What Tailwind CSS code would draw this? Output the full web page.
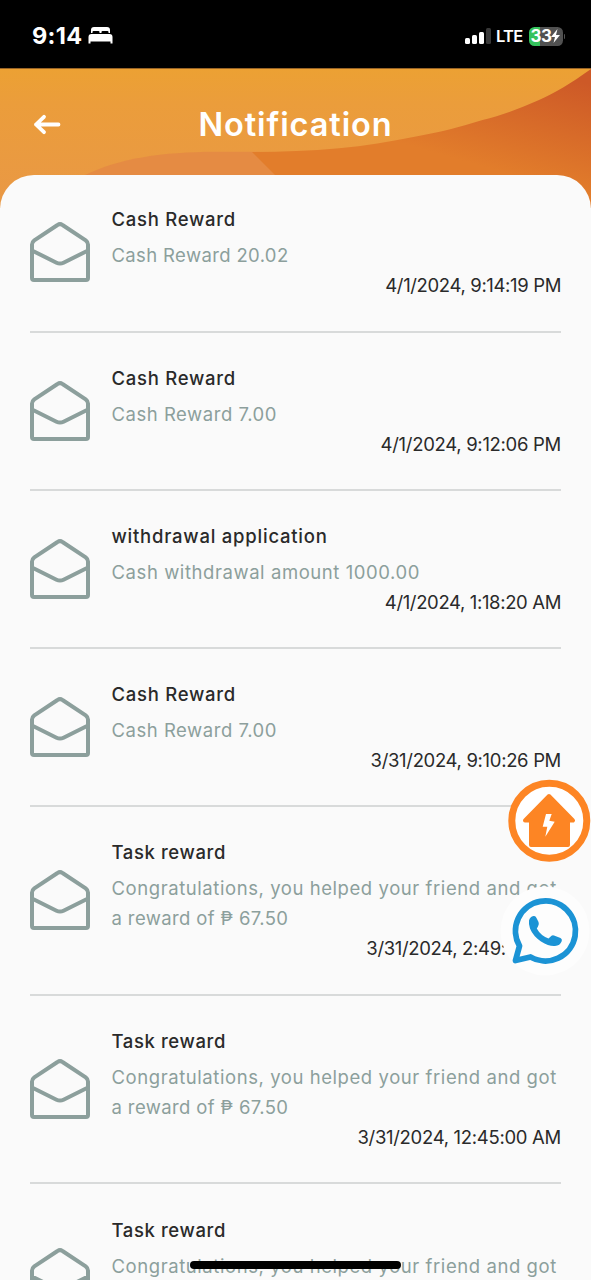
<!DOCTYPE html>
<html lang="en">
<head>
<meta charset="utf-8">
<title>Notification</title>
<script src="https://cdn.jsdelivr.net/npm/@tailwindcss/browser@4"></script>
</head>
<body class="bg-[#fafafa]">
<svg class="hidden">
  <symbol id="mail" viewBox="0 0 60 60">
    <path d="M2 22.5Q2 20 4.300 18.300L27.500 3Q30 1.200 32.500 3L55.700 18.300Q58 20 58 22.500V56Q58 58 56 58H4Q2 58 2 56ZM2 28.500L26.500 40.700Q30 42.500 33.500 40.700L58 28.500" fill="none" stroke="#8c9f9c" stroke-width="4" stroke-linejoin="round"/>
  </symbol>
</svg>
<div class="relative flex h-[1280px] w-[591px] flex-col overflow-hidden bg-[#fafafa] font-['Inter','Liberation_Sans',sans-serif] text-[18.5px] leading-[30px] text-[#2a2a2a]">

  <div class="flex h-[68px] shrink-0 items-center bg-black pt-1 pr-[26px] pl-8 text-white">
    <span class="text-[23.500px] font-bold tracking-[0.3px]">9:14</span>
    <svg class="ml-[6px] h-[18px] w-[25px]" viewBox="0 0 25 18" fill="#fff"><path d="M3 6V3Q3 0 6 0H19Q22 0 22 3V6H20.500V5Q20.500 4 19.500 4H14.500Q13.500 4 13.500 5V6H11.500V5Q11.500 4 10.500 4H5.500Q4.500 4 4.500 5V6ZM3.500 7H21.500Q24.500 7 24.500 10V16.500H22.500V14.500H2.500V16.500H.500V10Q.500 7 3.500 7Z"/></svg>
    <div class="ml-auto flex items-end gap-[2px]">
      <i class="h-[6px] w-[5px] rounded-[1.500px] bg-white"></i>
      <i class="h-[9px] w-[5px] rounded-[1.500px] bg-white"></i>
      <i class="h-[12px] w-[5px] rounded-[1.500px] bg-white"></i>
      <i class="h-[16px] w-[5px] rounded-[1.500px] bg-[#383838]"></i>
    </div>
    <span class="ml-[5px] text-[16.500px] font-semibold tracking-[-0.7px]">LTE</span>
    <div class="ml-[6px] flex h-[19px] w-[34px] items-center justify-center rounded-[5.500px] bg-linear-to-r from-[#35c25c] from-33% to-[#515151] to-33% text-[17px] font-bold tracking-[-0.5px]">33<svg class="h-[14px] w-[9px]" viewBox="0 0 9 14" fill="#fff"><path d="M6.500 0L0 8H4L2.500 14L9 6H5Z"/></svg></div>
    <i class="ml-[1px] h-[5px] w-[1.500px] rounded-r bg-[#515151]"></i>
  </div>

  <div class="relative h-[140px] shrink-0">
    <svg class="absolute inset-0" width="591" height="140" viewBox="0 68 591 140">
      <defs>
        <linearGradient id="g1" x1="0" y1="0" x2="0" y2="1"><stop offset="0" stop-color="#eca133"/><stop offset=".25" stop-color="#eb9d3b"/><stop offset="1" stop-color="#e99845"/></linearGradient>
        <linearGradient id="g2" gradientUnits="userSpaceOnUse" x1="560" y1="75" x2="530" y2="180"><stop offset="0" stop-color="#cd5927"/><stop offset="1" stop-color="#e27d2b"/></linearGradient>
      </defs>
      <path fill="url(#g1)" d="M0 68H591V208H0Z"/>
      <path fill="#e58b43" d="M85 175C120 158 162 152 215 151.700H260L290 190H85Z"/>
      <path fill="url(#g2)" d="M591 69C570 84 555 93 539 100C521 108 503 115 482.500 120C460 127 439 132.500 414.600 136.700C390 141.500 365 146 339 148.300C310 151 280 152 252 152L276 176V208H591Z"/>
      <path d="M0 68.500H591" stroke="#9a6425" stroke-width="1"/>
    </svg>
    <div class="relative flex h-[107px] items-center justify-center">
      <svg class="absolute top-[46px] left-[33px] h-[21px] w-[28px]" viewBox="0 0 28 21" fill="none" stroke="#fff" stroke-width="3.800" stroke-linecap="round" stroke-linejoin="round"><path d="M25.500 10.500H3M11 2.800L3 10.500L11 18.200"/></svg>
      <h1 class="pt-[6px] text-[32.500px] font-semibold tracking-[0.9px] text-white">Notification</h1>
    </div>
  </div>

  <main class="relative -mt-[33px] grow rounded-t-[34px] bg-[#fafafa] px-[30px]">
    <div class="-mt-[0.700px]">
      <article class="flex h-[158.250px] items-center gap-[21.500px] border-b-2 border-[#d8dada]">
        <svg class="size-[60px] shrink-0"><use href="#mail"/></svg>
        <div class="grow"><h2 class="pb-[6px] font-medium"><span class="tracking-[0.73px]">Cash Reward</span></h2><p class="text-[#8c9f9c]"><span class="tracking-[0.36px]">Cash Reward 20.02</span></p><p class="text-right"><span class="tracking-[-0.36px]">4/1/2024, 9:14:19 PM</span></p></div>
      </article>
      <article class="flex h-[158.250px] items-center gap-[21.500px] border-b-2 border-[#d8dada]">
        <svg class="size-[60px] shrink-0"><use href="#mail"/></svg>
        <div class="grow"><h2 class="pb-[6px] font-medium"><span class="tracking-[0.73px]">Cash Reward</span></h2><p class="text-[#8c9f9c]"><span class="tracking-[0.53px]">Cash Reward 7.00</span></p><p class="text-right"><span class="tracking-[-0.3px]">4/1/2024, 9:12:06 PM</span></p></div>
      </article>
      <article class="flex h-[158.250px] items-center gap-[21.500px] border-b-2 border-[#d8dada]">
        <svg class="size-[60px] shrink-0"><use href="#mail"/></svg>
        <div class="grow"><h2 class="pb-[6px] font-medium"><span class="tracking-[0.77px]">withdrawal application</span></h2><p class="text-[#8c9f9c]"><span class="tracking-[0.57px]">Cash withdrawal amount 1000.00</span></p><p class="text-right"><span class="tracking-[-0.36px]">4/1/2024, 1:18:20 AM</span></p></div>
      </article>
      <article class="flex h-[158.250px] items-center gap-[21.500px] border-b-2 border-[#d8dada]">
        <svg class="size-[60px] shrink-0"><use href="#mail"/></svg>
        <div class="grow"><h2 class="pb-[6px] font-medium"><span class="tracking-[0.73px]">Cash Reward</span></h2><p class="text-[#8c9f9c]"><span class="tracking-[0.53px]">Cash Reward 7.00</span></p><p class="text-right"><span class="tracking-[-0.33px]">3/31/2024, 9:10:26 PM</span></p></div>
      </article>
      <article class="flex h-[188.300px] items-center gap-[21.500px] border-b-2 border-[#d8dada]">
        <svg class="size-[60px] shrink-0"><use href="#mail"/></svg>
        <div class="grow whitespace-nowrap"><h2 class="pb-[6px] font-medium"><span class="tracking-[0.6px]">Task reward</span></h2><p class="text-[#8c9f9c]"><span class="tracking-[0.57px]">Congratulations, you helped your friend and got</span><br><span class="tracking-[0.38px]">a reward of ₱ 67.50</span></p><p class="text-right"><span class="tracking-[-0.34px]">3/31/2024, 2:49:45 PM</span></p></div>
      </article>
      <article class="flex h-[188.300px] items-center gap-[21.500px] border-b-2 border-[#d8dada]">
        <svg class="size-[60px] shrink-0"><use href="#mail"/></svg>
        <div class="grow whitespace-nowrap"><h2 class="pb-[6px] font-medium"><span class="tracking-[0.6px]">Task reward</span></h2><p class="text-[#8c9f9c]"><span class="tracking-[0.57px]">Congratulations, you helped your friend and got</span><br><span class="tracking-[0.38px]">a reward of ₱ 67.50</span></p><p class="text-right"><span class="tracking-[-0.3px]">3/31/2024, 12:45:00 AM</span></p></div>
      </article>
      <article class="flex h-[188.300px] items-center gap-[21.500px]">
        <svg class="size-[60px] shrink-0"><use href="#mail"/></svg>
        <div class="grow whitespace-nowrap"><h2 class="pb-[6px] font-medium"><span class="tracking-[0.6px]">Task reward</span></h2><p class="pb-[60px] text-[#8c9f9c]"><span class="tracking-[0.57px]">Congratulations, you helped your friend and got</span></p></div>
      </article>
    </div>
  </main>

  <svg class="absolute top-[779px] left-[507px]" width="84" height="84" viewBox="507 779 84 84">
    <circle cx="549.300" cy="820.700" r="37.500" fill="#fff" stroke="#fd8524" stroke-width="7"/>
    <path d="M549 796L573 820.500H568V845H531V820.500H525Z" fill="#fd8524" stroke="#fd8524" stroke-width="4" stroke-linejoin="round"/>
    <path d="M546 814H551.700L549.300 820.700L554.700 821.700L545.300 836.700L547.300 826.700H542.700Z" fill="#fff"/>
  </svg>
  <svg class="absolute top-[886px] left-[500px]" width="91" height="90" viewBox="500 886 91 90">
    <circle cx="545" cy="931" r="44.500" fill="#fdfdfd"/>
    <path d="M515.500 960.500L519.500 946A30 30 0 1 1 530.500 957Z" fill="#fdfdfd" stroke="#1b93d5" stroke-width="5.800" stroke-linejoin="round"/>
    <path d="M529 920.500Q530 916.500 533.500 916Q535.500 915.500 536.500 918L538.500 922Q539.500 924.500 538 926.500L536.800 928.500Q540.500 935.500 548.500 938.500L551.500 935.800Q552.500 935 554 935.500L560.500 938Q562.300 939 561.800 941Q560 945.800 555 946Q549 946.500 541 941.500Q533 936 530 928.500Q528.500 924 529 920.500Z" fill="#1b93d5"/>
  </svg>
  <div class="absolute top-[1261px] left-[190px] h-[8px] w-[211px] rounded-full bg-black"></div>
</div>
</body>
</html>
